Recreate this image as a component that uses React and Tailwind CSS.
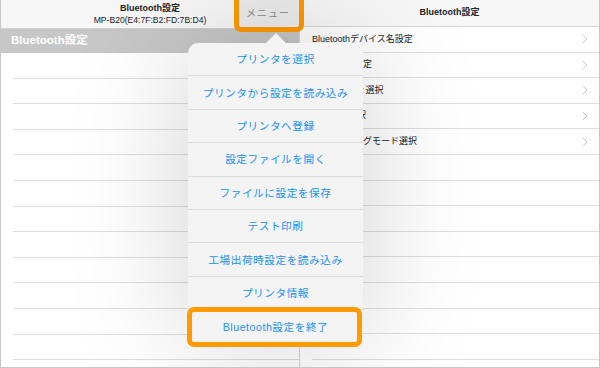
import React from 'react';

const menuItems = [
  'プリンタを選択',
  'プリンタから設定を読み込み',
  'プリンタへ登録',
  '設定ファイルを開く',
  'ファイルに設定を保存',
  'テスト印刷',
  '工場出荷時設定を読み込み',
  'プリンタ情報',
  'Bluetooth設定を終了',
];

const settingRows = [
  'Bluetoothデバイス名設定',
  'PINコード設定',
  'セキュリティ選択',
  '通信方式選択',
  'iOSペアリングモード選択',
];

// small gray disclosure arrow
const Chevron = ({ color = '#c4c4c8' }) => (
  <svg width="6" height="10" viewBox="0 0 6 10" fill="none">
    <polyline points="1,1 5,5 1,9" stroke={color} strokeWidth="1" />
  </svg>
);

const App = () => {
  return (
    <div className="relative w-[600px] h-[368px] overflow-hidden bg-white border-x border-b border-[#c6c6c6] flex font-['Liberation_Sans','Noto_Sans_CJK_JP',sans-serif] text-[#222]">
      {/* Left pane */}
      <div className="w-[299px] shrink-0 border-r border-[#d4d4d4] flex flex-col">
        <div className="relative h-[29px] shrink-0 bg-[#f7f7f7] border-b border-[#cfcfcf] flex flex-col items-center justify-center leading-none">
          <div className="text-[9px] font-bold">Bluetooth設定</div>
          <div className="text-[8.6px] mt-[3px]">MP-B20(E4:7F:B2:FD:7B:D4)</div>
          <div className="absolute right-0 top-0 h-[28px] w-[62px] bg-[#ececec] flex items-center justify-center text-[10px] text-[#8a8a8a] tracking-[1px]">
            メニュー
          </div>
        </div>

        <div className="h-[24px] shrink-0 bg-[#c7c7c7] flex items-center justify-between pl-[10px] pr-[10px]">
          <span className="text-[11.5px] font-bold text-white">Bluetooth設定</span>
          <Chevron color="#b0b0b0" />
        </div>

        {Array.from({ length: 13 }).map((_, i) => (
          <div key={i} className="h-[25.6px] shrink-0 pl-[12px]">
            <div className="h-full border-b border-[#dedede]" />
          </div>
        ))}
      </div>

      {/* Right pane */}
      <div className="flex-1 flex flex-col">
        <div className="h-[27px] shrink-0 bg-[#f7f7f7] border-b border-[#d6d6d6] flex items-center justify-center text-[9px] font-bold">
          Bluetooth設定
        </div>
        {settingRows.map((label) => (
          <div key={label} className="h-[25.6px] shrink-0 pl-[12px]">
            <div className="h-full border-b border-[#dedede] flex items-center justify-between pr-[11px] text-[9px]">
              <span>{label}</span>
              <Chevron />
            </div>
          </div>
        ))}
        {Array.from({ length: 8 }).map((_, i) => (
          <div key={i} className="h-[25.6px] shrink-0 pl-[12px]">
            <div className="h-full border-b border-[#dedede]" />
          </div>
        ))}
      </div>

      {/* Orange highlight around the menu button */}
      <div className="absolute left-[233px] top-[-6px] w-[70px] h-[38px] rounded-[7px] border-[5px] border-[#ff9a00]" />

      {/* Popover */}
      <div className="absolute left-[187px] top-[43px] w-[175px] rounded-[10px] bg-[#f4f4f4] shadow-[0_0_120px_rgba(0,0,0,0.18)]">
        <div className="absolute left-[81px] top-[-7px] w-[14px] h-[14px] rotate-45 bg-[#f4f4f4]" />
        <div className="relative flex flex-col">
          {menuItems.map((item, i) => (
            <div
              key={item}
              className={`h-[33.4px] flex items-center justify-center text-[10.7px] text-[#2190f5] tracking-[0.5px] ${
                i < menuItems.length - 1 ? 'border-b border-[#dcdcdc]' : ''
              }`}
            >
              {item}
            </div>
          ))}
        </div>
      </div>

      {/* Orange highlight around the last menu item */}
      <div className="absolute left-[186px] top-[307px] w-[175px] h-[40px] rounded-[7px] border-[5px] border-[#ff9a00]" />
    </div>
  );
};

export default App;
